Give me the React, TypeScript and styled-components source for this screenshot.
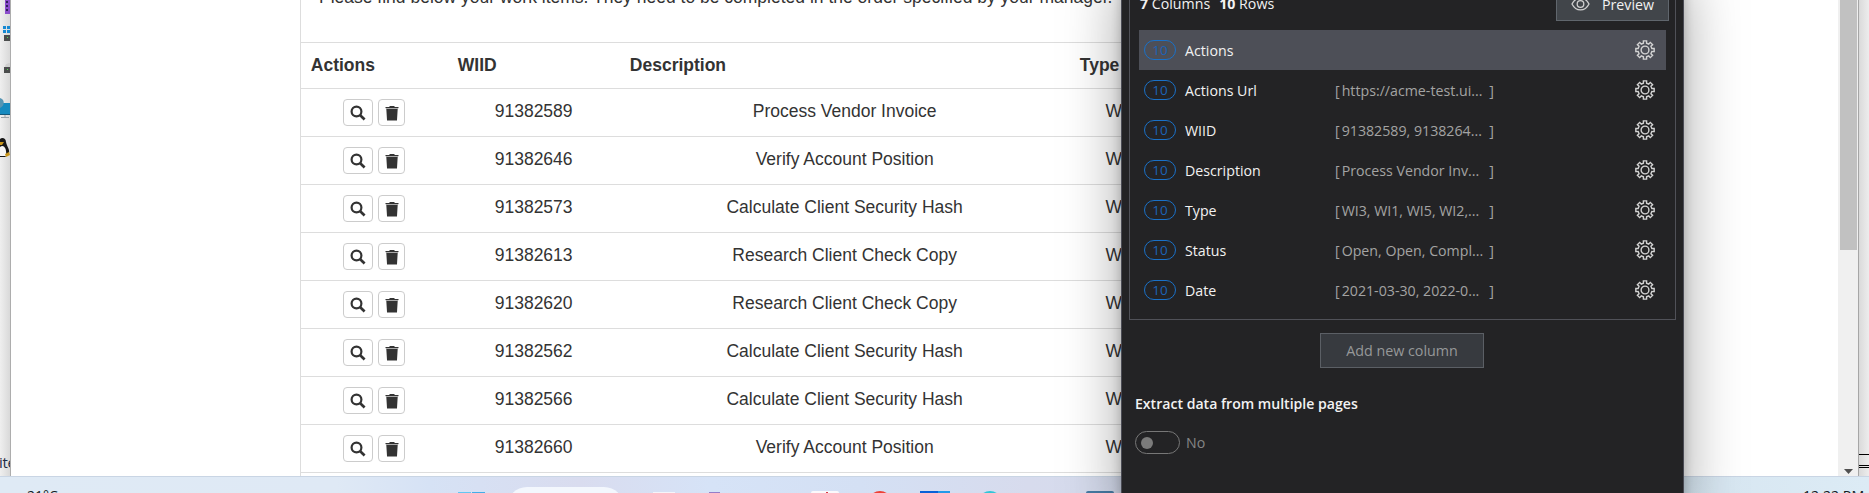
import React from 'react';
import styled, { createGlobalStyle } from 'styled-components';

const Global = createGlobalStyle`
  * { box-sizing: border-box; }
  body { margin: 0; overflow: hidden; background: #e8e8e8; }
`;

const Screen = styled.div`
  position: relative;
  display: flex;
  flex-direction: column;
  width: 1869px;
  height: 493px;
  overflow: hidden;
  font-family: 'Liberation Sans', Arial, sans-serif;
`;
const Desktop = styled.div`
  display: flex;
  height: 476px;
`;
const LeftStrip = styled.div`
  position: relative;
  width: 11px;
  flex: none;
  overflow: hidden;
  background: linear-gradient(90deg, #efefef, #d9d9d9);
  border-right: 1px solid #adadad;
  svg { display: block; }
`;
const StripLabel = styled.span`
  position: absolute;
  left: -1px;
  top: 452px;
  font: 15px/20px 'Open Sans', sans-serif;
  letter-spacing: -0.3px;
  color: #1d2c45;
`;
const RightStrip = styled.div`
  display: flex;
  flex-direction: column;
  justify-content: flex-end;
  width: 11px;
  flex: none;
  border-left: 1px solid #a6a6a6;
  background: linear-gradient(90deg, #dadada, #ededed);
`;
const Lines = styled.div`
  height: 14px;
  margin-bottom: 8px;
  border-top: 1px solid #000;
  border-bottom: 3px double #000;
`;
const Page = styled.div`
  flex: 1;
  display: flex;
  justify-content: space-between;
  overflow: hidden;
  background: #fff;
`;
const Content = styled.div`
  width: 873px;
  margin-left: 289px;
  border-left: 1px solid #ddd;
  font-size: 17.5px;
  line-height: 25px;
  color: #333;
  flex: none;
`;
const Intro = styled.p`
  display: flex;
  align-items: flex-end;
  height: 42px;
  margin: 0;
  padding: 0 0 32px 18px;
  line-height: 25px;
  white-space: nowrap;
`;
const Row = styled.div<{ $head?: boolean }>`
  display: grid;
  grid-template-columns: 147px 172px 450px 103px;
  height: ${p => (p.$head ? 46 : 48)}px;
  border-top: 1px solid #ddd;
  font-weight: ${p => (p.$head ? 700 : 400)};
  text-align: ${p => (p.$head ? 'left' : 'center')};
`;
const Cell = styled.div`
  padding: 10px 10.5px 10px 9.8px;
  white-space: nowrap;
`;
const ActionCell = styled(Cell)`
  display: flex;
  justify-content: center;
  gap: 5px;
  padding: 10px 11px 10px 10px;
`;
const IconButton = styled.button<{ $w: number }>`
  display: flex;
  align-items: center;
  justify-content: center;
  width: ${p => p.$w}px;
  height: 27px;
  padding: 0;
  border: 1px solid #ccc;
  border-radius: 4px;
  background: #fff;
`;
const Scrollbar = styled.div`
  display: flex;
  flex-direction: column;
  justify-content: space-between;
  align-items: flex-end;
  width: 20px;
  flex: none;
  background: #f0f0f0;
`;
const Thumb = styled.div`
  width: 17px;
  height: 250px;
  margin-right: 1px;
  background: #c1c1c1;
`;
const ScrollDown = styled.svg`
  display: block;
  margin: 0 5px 2px 0;
`;

const Taskbar = styled.div`
  position: relative;
  height: 17px;
  overflow: hidden;
  border-top: 1px solid #c9d5e4;
  background: linear-gradient(90deg, #dfeaf5 0, #dfe9f5 18%, #d6e2f5 23%, #d9dcef 31%, #d6e3f7 38%, #d4e0f4 46%, #d7dbed 55%, #d5dced 61%, #d7e6f1 90%, #dcebf5);
`;
const TaskIcons = styled.svg`
  display: block;
`;
const TaskText = styled.span<{ $x: number; $s: number }>`
  position: absolute;
  left: ${p => p.$x}px;
  top: 9px;
  font: ${p => p.$s}px/20px 'Open Sans', sans-serif;
  white-space: nowrap;
  color: #161c22;
`;

const Panel = styled.aside`
  position: absolute;
  left: 1121px;
  top: -20px;
  width: 563px;
  height: 540px;
  padding: 0 7px;
  border: 1px solid #4a4b54;
  background: #232325;
  box-shadow: 0 0 55px rgba(0, 0, 0, 0.36), 0 0 10px rgba(0, 0, 0, 0.2);
  font-family: 'Open Sans', 'Noto Sans', sans-serif;
  font-size: 14.2px;
  color: #f2f2f2;
`;
const ColumnBox = styled.section`
  width: 547px;
  height: 339px;
  padding: 0 9px;
  border: 1px solid #505158;
  border-top: 0;
`;
const Summary = styled.header`
  display: flex;
  justify-content: space-between;
  height: 49px;
  margin-right: -3px;
  padding-left: 1px;
`;
const Counts = styled.div`
  display: flex;
  gap: 9px;
  padding-top: 13px;
  line-height: 20px;
  white-space: nowrap;
`;
const Preview = styled.button`
  display: flex;
  align-items: center;
  gap: 12px;
  width: 113px;
  height: 40px;
  padding: 6px 0 0 14px;
  border: 1px solid #60666d;
  background: #41454a;
  font: inherit;
  color: #f2f2f2;
`;
const ColumnRow = styled.div<{ $active?: boolean }>`
  display: grid;
  grid-template-columns: 41px 149px 1fr 20px;
  align-items: center;
  height: 40px;
  padding: 0 11px 0 5px;
  background: ${p => (p.$active ? '#4d4f57' : 'transparent')};
`;
const Pill = styled.span`
  width: 32px;
  height: 20px;
  border: 1px solid #1a71c8;
  border-radius: 10px;
  font-size: 13.5px;
  line-height: 18px;
  text-align: center;
  color: #1c62b5;
`;
const Sample = styled.div`
  display: flex;
  justify-content: space-between;
  width: 160px;
  padding-left: 1px;
  white-space: nowrap;
  color: #a3a3a3;
`;
const Value = styled.span`
  flex: 1;
  padding-left: 2px;
`;
const AddColumn = styled.button`
  display: block;
  width: 164px;
  height: 35px;
  margin: 13px 0 0 191px;
  border: 1px solid #5b5f65;
  background: #373a3f;
  font: inherit;
  font-size: 14.3px;
  color: #969899;
`;
const Heading = styled.h2`
  margin: 26px 0 0 6px;
  font-size: 14.08px;
  font-weight: 600;
  line-height: 20px;
`;
const Toggle = styled.div`
  display: flex;
  align-items: center;
  gap: 6px;
  margin: 17px 0 0 6px;
  color: #858585;
`;
const Track = styled.span`
  display: flex;
  align-items: center;
  width: 45px;
  height: 23px;
  padding-left: 5px;
  border: 1px solid #777;
  border-radius: 12px;
`;
const Knob = styled.span`
  width: 12px;
  height: 12px;
  border-radius: 50%;
  background: #7b7b7b;
`;

const gearPath = (() => {
  const pts: string[] = [];
  const at = (r: number, deg: number) => {
    const a = (deg * Math.PI) / 180;
    pts.push((10 + r * Math.cos(a)).toFixed(2) + ' ' + (10 + r * Math.sin(a)).toFixed(2));
  };
  for (let i = 0; i < 8; i++) {
    const c = i * 45 - 90;
    at(7, c - 13);
    at(9.3, c - 10);
    at(9.3, c + 10);
    at(7, c + 13);
  }
  return 'M' + pts.join('L') + 'Z';
})();

const Gear = () => (
  <svg width="20" height="20" viewBox="0 0 20 20" fill="none" stroke="#d2d2d2" strokeWidth="1.4">
    <path d={gearPath} />
    <circle cx="10" cy="10" r="3.9" />
  </svg>
);
const Eye = () => (
  <svg width="19" height="14" viewBox="0 0 19 14" fill="none" stroke="#d0d0d0" strokeWidth="1.3">
    <path d="M1 7C5-.9 14-.9 18 7C14 14.900 5 14.900 1 7Z" />
    <circle cx="9.500" cy="7" r="3.300" />
  </svg>
);
const Search = () => (
  <svg width="16" height="16" viewBox="0 0 16 16" fill="none" stroke="#333">
    <circle cx="6.500" cy="6.500" r="4.900" strokeWidth="2.200" />
    <path d="M10.200 10.200L14.600 14.400" strokeWidth="2.700" />
  </svg>
);
const Trash = () => (
  <svg width="14" height="16" viewBox="0 0 14 16">
    <path d="M4.500 1h5v1h4v1H.5V2h4Z" fill="#333" />
    <path d="M.8 3h12.400v1H.8Z" fill="#aaa" />
    <path d="M1.300 4h11.400l-.7 11.500H2Z" fill="#333" />
  </svg>
);

const items = [
  ['91382589', 'Process Vendor Invoice', 'WI3'],
  ['91382646', 'Verify Account Position', 'WI1'],
  ['91382573', 'Calculate Client Security Hash', 'WI5'],
  ['91382613', 'Research Client Check Copy', 'WI2'],
  ['91382620', 'Research Client Check Copy', 'WI2'],
  ['91382562', 'Calculate Client Security Hash', 'WI5'],
  ['91382566', 'Calculate Client Security Hash', 'WI5'],
  ['91382660', 'Verify Account Position', 'WI1'],
];
const columns: { name: string; value?: string }[] = [
  { name: 'Actions' },
  { name: 'Actions Url', value: 'https://acme-test.ui...' },
  { name: 'WIID', value: '91382589, 9138264...' },
  { name: 'Description', value: 'Process Vendor Inv...' },
  { name: 'Type', value: 'WI3, WI1, WI5, WI2,...' },
  { name: 'Status', value: 'Open, Open, Compl...' },
  { name: 'Date', value: '2021-03-30, 2022-0...' },
];

export default function App() {
  return (
    <Screen>
      <Global />
      <Desktop>
        <LeftStrip>
          <svg width="11" height="170" viewBox="0 0 11 170">
            <path d="M5 0h6v14H5Z" fill="#8a4dcb" />
            <path d="M6 1h2v2H6ZM6 5h2v2H6ZM6 9h2v2H6Z" fill="#31205c" />
            <path d="M3 26h3v3H3ZM7 26h3v3H7ZM3 30h3v3H3ZM7 30h3v3H7Z" fill="#1689d3" />
            <path d="M4 35h7v6H4ZM4 67h7v6H4Z" fill="#4b4d4d" />
            <path d="M5 67C5 64 8 63 11 63v4Z" fill="#cfcfcf" />
            <path d="M7 37h1v1H7ZM7 69h1v1H7Z" fill="#56dc50" />
            <path d="M0 103h11v12H0Z" fill="#168abf" />
            <path d="M0 114h11v1H0Z" fill="#155779" />
            <path d="M0 98C5 99 5 106 0 108Z" fill="#5795b3" />
            <path d="M1 117.500h8M5 115v2" stroke="#9ba4aa" />
            <path d="M0 139C2 137 6 138 6 142C7 147 10 149 9 154L5 157H0Z" fill="#171717" />
            <path d="M0 147C4 144 7 149 6 156H0Z" fill="#f6f6f6" />
            <path d="M0 142h4l-2 3H0ZM5 154l4-2 1 3-4 2Z" fill="#c8951a" />
          </svg>
          <StripLabel>ite</StripLabel>
        </LeftStrip>
        <Page>
          <Content>
            <Intro>Please find below your work items. They need to be completed in the order specified by your manager.</Intro>
            <Row $head>
              <Cell>Actions</Cell>
              <Cell>WIID</Cell>
              <Cell>Description</Cell>
              <Cell>Type</Cell>
            </Row>
            {items.map(([id, description, type]) => (
              <Row key={id}>
                <ActionCell>
                  <IconButton $w={30}><Search /></IconButton>
                  <IconButton $w={27}><Trash /></IconButton>
                </ActionCell>
                <Cell>{id}</Cell>
                <Cell>{description}</Cell>
                <Cell>{type}</Cell>
              </Row>
            ))}
            <Row />
          </Content>
          <Scrollbar>
            <Thumb />
            <ScrollDown width="9" height="5" viewBox="0 0 9 5"><path d="M0 0h9L4.500 5Z" fill="#505050" /></ScrollDown>
          </Scrollbar>
        </Page>
        <RightStrip><Lines /></RightStrip>
      </Desktop>
      <Taskbar>
        <TaskIcons width="1122" height="16" viewBox="0 477 1122 16">
          <path d="M458 492h13v1H458Z" fill="#63c6f2" />
          <path d="M472 492h13v1H472Z" fill="#43ade8" />
          <rect x="507" y="487" width="117" height="40" rx="20" fill="#f3f7fd" />
          <path d="M653 492h22v1H653Z" fill="#f5f5fa" />
          <path d="M709 492h11v1H709Z" fill="#957ec9" />
          <rect x="811" y="491" width="28" height="8" rx="2" fill="#fbf9fb" />
          <path d="M826 492h2v1H826Z" fill="#d63b48" />
          <circle cx="880" cy="503" r="12" fill="#ee4035" />
          <path d="M920 491h18v2H920Z" fill="#0861d8" />
          <path d="M938 491h12v2H938Z" fill="#219ae9" />
          <circle cx="990" cy="503" r="12" fill="#31c5d7" />
          <rect x="1086" y="491" width="28" height="8" rx="2" fill="#467ba4" />
        </TaskIcons>
        <TaskText $x={27} $s={14}>21°C</TaskText>
        <TaskText $x={1803} $s={14.2}>12:22 PM</TaskText>
      </Taskbar>
      <Panel>
        <ColumnBox>
          <Summary>
            <Counts>
              <span><b>7</b> Columns</span>
              <span><b>10</b> Rows</span>
            </Counts>
            <Preview><Eye />Preview</Preview>
          </Summary>
          {columns.map((c, i) => (
            <ColumnRow key={c.name} $active={i === 0}>
              <Pill>10</Pill>
              <span>{c.name}</span>
              <div>
                {c.value && (
                  <Sample>
                    <span>[</span>
                    <Value>{c.value}</Value>
                    <span>]</span>
                  </Sample>
                )}
              </div>
              <Gear />
            </ColumnRow>
          ))}
        </ColumnBox>
        <AddColumn>Add new column</AddColumn>
        <Heading>Extract data from multiple pages</Heading>
        <Toggle>
          <Track><Knob /></Track>
          No
        </Toggle>
      </Panel>
    </Screen>
  );
}
